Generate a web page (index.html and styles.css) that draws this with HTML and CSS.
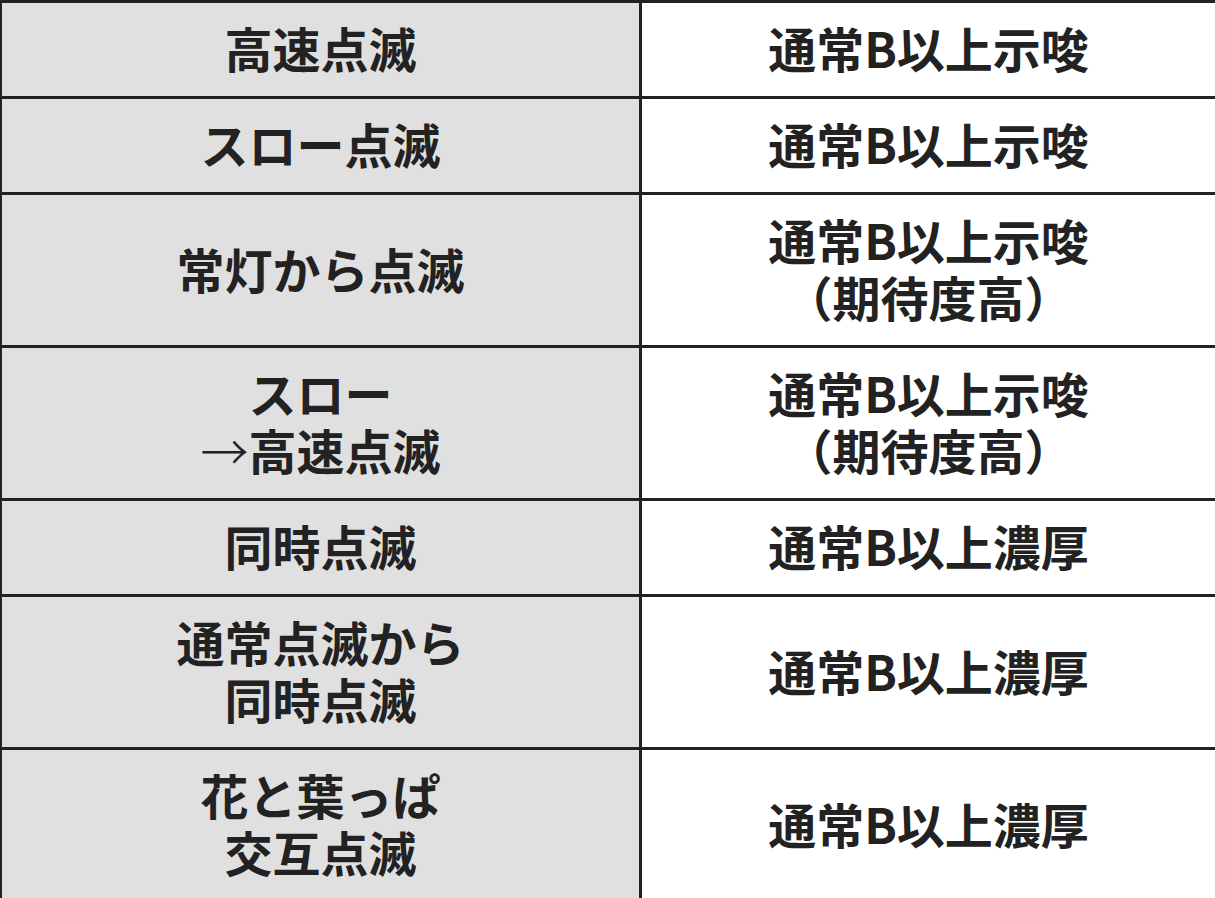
FILE: index.html
```html
<!DOCTYPE html>
<html lang="ja">
<head>
<meta charset="utf-8">
<title>点滅パターン</title>
<link rel="stylesheet" href="styles.css">
</head>
<body>
<table class="tbl">
  <colgroup><col class="c-left"><col class="c-right"></colgroup>
  <tbody>
    <tr><td class="k">高速点滅</td><td class="v">通常B以上示唆</td></tr>
    <tr><td class="k">スロー点滅</td><td class="v">通常B以上示唆</td></tr>
    <tr><td class="k">常灯から点滅</td><td class="v">通常B以上示唆<br>（期待度高）</td></tr>
    <tr><td class="k">スロー<br><span class="arrow">→</span>高速点滅</td><td class="v">通常B以上示唆<br>（期待度高）</td></tr>
    <tr><td class="k">同時点滅</td><td class="v">通常B以上濃厚</td></tr>
    <tr><td class="k">通常点滅から<br>同時点滅</td><td class="v">通常B以上濃厚</td></tr>
    <tr><td class="k">花と葉っぱ<br>交互点滅</td><td class="v">通常B以上濃厚</td></tr>
  </tbody>
</table>
</body>
</html>
```

FILE: styles.css
```css
html, body {
  margin: 0;
  padding: 0;
  background: #ffffff;
}
body {
  font-family: "Noto Sans CJK JP", "Noto Sans", sans-serif;
  color: #222222;
  overflow: hidden;
}
.tbl {
  border-collapse: collapse;
  table-layout: fixed;
  width: 1216px;
  margin-left: -1px;
}
.c-left { width: 640px; }
.c-right { width: 576px; }
.tbl td {
  border: 3px solid #222222;
  padding: 16px 0 20px;
  font-size: 48px;
  font-weight: 700;
  line-height: 57px;
  text-align: center;
  vertical-align: middle;
}
.tbl td.k { background: #e0e0e0; }
.tbl td.v { background: #ffffff; }
.arrow {
  font-weight: 300;
}
```
